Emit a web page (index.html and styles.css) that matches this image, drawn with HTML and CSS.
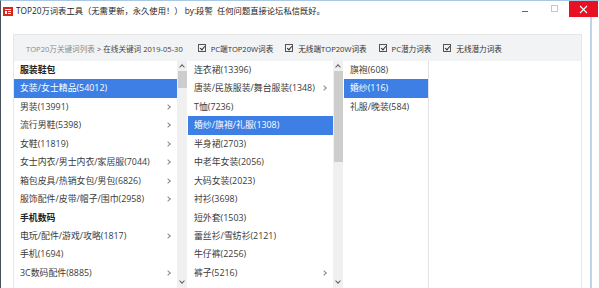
FILE: index.html
```html
<!DOCTYPE html>
<html>
<head>
  <meta charset="utf-8">
  <title>TOP20万词表工具</title>
  <link rel="stylesheet" href="styles.css">
</head>
<body>
  <div class="window">
    <div class="titlebar">
      <svg class="logo" width="10" height="9" viewBox="0 0 10 9">
        <rect width="10" height="9" fill="#d7261e"/>
        <rect x="2" y="2" width="6" height="1" fill="#fff"/>
        <rect x="2" y="4" width="2" height="3" fill="#fff"/>
        <rect x="5" y="4" width="3" height="1" fill="#fff"/>
        <rect x="5" y="6" width="3" height="1" fill="#fff"/>
      </svg>
      <span class="title">TOP20万词表工具（无需更新，永久使用！） by:段警&nbsp; 任何问题直接论坛私信既好。</span>
      <div class="controls">
        <span class="min"></span>
        <span class="max"></span>
        <span class="close">
          <svg width="9" height="9" viewBox="0 0 9 9"><path d="M1 1L8 8M8 1L1 8" stroke="#fff" stroke-width="1.1"/></svg>
        </span>
      </div>
    </div>

    <div class="content">
      <div class="panel">
        <div class="panel-head">
          <span class="crumb"><span class="crumb-root">TOP20万关键词列表</span> &gt; 在线关键词 2019-05-30</span>
          <label class="check"><span class="box"></span>PC端TOP20W词表</label>
          <label class="check"><span class="box"></span>无线端TOP20W词表</label>
          <label class="check"><span class="box"></span>PC潜力词表</label>
          <label class="check"><span class="box"></span>无线潜力词表</label>
        </div>

        <div class="lists">
          <ul class="list col1">
            <li class="group">服装鞋包</li>
            <li class="active">女装/女士精品(54012)</li>
            <li class="more">男装(13991)</li>
            <li class="more">流行男鞋(5398)</li>
            <li class="more">女鞋(11819)</li>
            <li class="more">女士内衣/男士内衣/家居服(7044)</li>
            <li class="more">箱包皮具/热销女包/男包(6826)</li>
            <li class="more">服饰配件/皮带/帽子/围巾(2958)</li>
            <li class="group">手机数码</li>
            <li class="more">电玩/配件/游戏/攻略(1817)</li>
            <li>手机(1694)</li>
            <li class="more">3C数码配件(8885)</li>
          </ul>
          <div class="scroll">
            <span class="arrow up"></span>
            <span class="thumb short"></span>
            <span class="arrow down"></span>
          </div>

          <ul class="list col2">
            <li>连衣裙(13396)</li>
            <li class="more">唐装/民族服装/舞台服装(1348)</li>
            <li>T恤(7236)</li>
            <li class="active">婚纱/旗袍/礼服(1308)</li>
            <li>半身裙(2703)</li>
            <li>中老年女装(2056)</li>
            <li>大码女装(2023)</li>
            <li>衬衫(3698)</li>
            <li>短外套(1503)</li>
            <li>蕾丝衫/雪纺衫(2121)</li>
            <li>牛仔裤(2256)</li>
            <li class="more">裤子(5216)</li>
          </ul>
          <div class="scroll">
            <span class="arrow up"></span>
            <span class="thumb long"></span>
            <span class="arrow down"></span>
          </div>

          <ul class="list col3">
            <li>旗袍(608)</li>
            <li class="active">婚纱(116)</li>
            <li>礼服/晚装(584)</li>
          </ul>

          <div class="list col4"></div>
        </div>
      </div>
      <div class="frame-edge"></div>
    </div>
  </div>
</body>
</html>
```

FILE: styles.css
```css
* { box-sizing: border-box; }
body { margin: 0; width: 599px; height: 288px; overflow: hidden; background: #fff; font-family: "Open Sans", "Noto Sans CJK SC", sans-serif; color: #333; }

.window { height: 288px; border-left: 1px solid #47525e; border-top: 1px solid #a8c8e4; display: flex; flex-direction: column; }

.titlebar { display: flex; align-items: flex-start; height: 33px; }
.logo { margin: 6px 0 0 2px; }
.title { font-size: 8.3px; line-height: 10px; margin: 5px 0 0 3px; color: #222; white-space: nowrap; }
.controls { margin-left: auto; margin-right: 1px; display: flex; align-items: center; height: 16px; }
.min { width: 6px; height: 1px; background: #666; margin-right: 23px; margin-top: 4px; }
.max { width: 7px; height: 7px; border: 1px solid #c8c8c8; margin-right: 11px; margin-top: -2px; }
.close { width: 29px; height: 16px; background: #e81123; display: flex; align-items: center; justify-content: center; }

.content { display: flex; flex: 1; padding-left: 12px; min-height: 0; }
.panel { width: 569px; border: 1px solid #e6e6e6; border-bottom: none; display: flex; flex-direction: column; }
.frame-edge { width: 2px; margin-left: 8px; margin-top: -17px; background: #bcd5e9; }

.panel-head { height: 26px; background: #f2f3f5; display: flex; align-items: center; padding-left: 12px; font-size: 7.6px; color: #444; white-space: nowrap; }
.crumb { margin-right: 15px; }
.crumb-root { color: #8a8a8a; }
.check { display: flex; align-items: center; margin-right: 12px; color: #333; }
.box { width: 8px; height: 8px; border: 1px solid #555; margin-right: 5px; position: relative; }
.box::after { content: ""; position: absolute; left: 2px; top: 0; width: 2px; height: 4px; border: solid #333; border-width: 0 1px 1px 0; transform: rotate(40deg); }

.lists { display: flex; flex: 1; min-height: 0; }
.list { margin: 0; padding: 0; list-style: none; background: #fff; }
.list li { height: 18.45px; line-height: 18.45px; padding-left: 6px; font-size: 8.9px; white-space: nowrap; position: relative; color: #3a3a3a; }
.list li.group { font-weight: bold; color: #222; }
.list li.active { background: #3d7fe4; color: #fff; }
.list li.more::after { content: ""; position: absolute; right: 7px; top: 7px; width: 3px; height: 3px; border: solid #8a8a8a; border-width: 1px 1px 0 0; transform: rotate(45deg); }

.col1 { width: 163px; }
.col2 { width: 145px; margin-left: 1px; }
.col3 { width: 86px; border-right: 1px solid #e3e3e3; padding-left: 1px; }
.col4 { flex: 1; }

.scroll { width: 10px; background: #f0f0f0; display: flex; flex-direction: column; align-items: center; }
.arrow { width: 10px; height: 10px; position: relative; }
.arrow::after { content: ""; position: absolute; left: 3px; width: 3px; height: 3px; border: solid #606060; border-width: 1px 1px 0 0; }
.arrow.up::after { top: 4px; transform: rotate(-45deg); }
.arrow.down { margin-top: auto; margin-bottom: 1px; }
.arrow.down::after { top: 2px; transform: rotate(135deg); }
.thumb { width: 9px; background: #cdcdcd; }
.thumb.short { height: 17px; }
.thumb.long { height: 91px; }
```
